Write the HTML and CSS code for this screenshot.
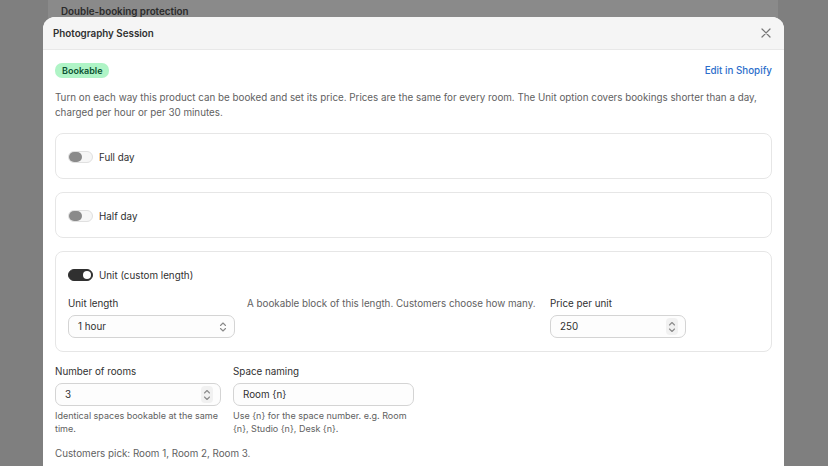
FILE: index.html
```html
<!DOCTYPE html>
<html lang="en">
<head>
    <meta charset="UTF-8">
    <meta name="viewport" content="width=device-width, initial-scale=1.0">
    <title>Photography Session</title>
    <link rel="stylesheet" href="styles.css">
</head>
<body>
    <div class="page">
        <div class="page-card">
            <h2>Double-booking protection</h2>
        </div>
    </div>

    <div class="modal">
        <div class="modal-header">
            <h1>Photography Session</h1>
            <button class="close-btn" aria-label="Close">
                <svg width="10" height="10" viewBox="0 0 10 10"><path d="M1 1L9 9M9 1L1 9" stroke="#777" stroke-width="1.2" stroke-linecap="round"/></svg>
            </button>
        </div>

        <div class="modal-body">
            <div class="top-row">
                <span class="badge">Bookable</span>
                <a class="link" href="#">Edit in Shopify</a>
            </div>
            <p class="intro">Turn on each way this product can be booked and set its price. Prices are the same for every room. The Unit option covers bookings shorter than a day, charged per hour or per 30 minutes.</p>

            <div class="option-card">
                <label class="toggle-row"><span class="toggle"></span>Full day</label>
            </div>

            <div class="option-card">
                <label class="toggle-row"><span class="toggle"></span>Half day</label>
            </div>

            <div class="option-card unit-card">
                <label class="toggle-row"><span class="toggle on"></span>Unit (custom length)</label>
                <div class="unit-fields">
                    <div class="field unit-length">
                        <label>Unit length</label>
                        <div class="input">1 hour
                            <svg class="chev" width="8" height="10" viewBox="0 0 8 10"><path d="M1.5 3.5L4 1L6.5 3.5M1.5 6.5L4 9L6.5 6.5" fill="none" stroke="#8a8a8a" stroke-width="1.1" stroke-linecap="round" stroke-linejoin="round"/></svg>
                        </div>
                    </div>
                    <div class="unit-desc">A bookable block of this length. Customers choose how many.</div>
                    <div class="field price">
                        <label>Price per unit</label>
                        <div class="input">250
                            <span class="spinner">
                                <svg width="8" height="12" viewBox="0 0 8 12"><path d="M1.5 4L4 1.5L6.5 4M1.5 8L4 10.5L6.5 8" fill="none" stroke="#8a8a8a" stroke-width="1.1" stroke-linecap="round" stroke-linejoin="round"/></svg>
                            </span>
                        </div>
                    </div>
                </div>
            </div>

            <div class="room-fields">
                <div class="field rooms">
                    <label>Number of rooms</label>
                    <div class="input">3
                        <span class="spinner">
                            <svg width="8" height="12" viewBox="0 0 8 12"><path d="M1.5 4L4 1.5L6.5 4M1.5 8L4 10.5L6.5 8" fill="none" stroke="#8a8a8a" stroke-width="1.1" stroke-linecap="round" stroke-linejoin="round"/></svg>
                        </span>
                    </div>
                    <div class="help">Identical spaces bookable at the same time.</div>
                </div>
                <div class="field naming">
                    <label>Space naming</label>
                    <div class="input">Room {n}</div>
                    <div class="help">Use {n} for the space number. e.g. Room {n}, Studio {n}, Desk {n}.</div>
                </div>
            </div>

            <p class="preview">Customers pick: Room 1, Room 2, Room 3.</p>
        </div>
    </div>
</body>
</html>
```

FILE: styles.css
```css
html, body {
    height: 100%;
}

body {
    margin: 0;
    font-family: Inter, "Noto Sans", sans-serif;
    color: #303030;
    background-color: #7f7f7f;
    overflow: hidden;
}

.page {
    padding: 0 50px 0 48px;
    height: 100%;
}

.page-card {
    background-color: #8a8a8a;
    height: 100%;
    padding: 6px 13px;
}

.page-card h2 {
    margin: 0;
    font-size: 9.8px;
    font-weight: 600;
    color: #2b2b2b;
}

/* modal sits over the page */
.modal {
    position: absolute;
    top: 17px;
    left: 43px;
    width: 741px;
    bottom: 0;
    background: white;
    border-radius: 12px 12px 0 0;
    overflow: hidden;
}

.modal-header {
    display: flex;
    align-items: center;
    justify-content: space-between;
    height: 33px;
    padding: 0 10px;
    background-color: #f5f5f5;
    border-bottom: 1px solid #e8e8e8;
    box-sizing: border-box;
}

.modal-header h1 {
    margin: 0;
    font-size: 9.8px;
    font-weight: 600;
    color: #303030;
}

.close-btn {
    background: none;
    border: none;
    padding: 0;
    width: 16px;
    height: 16px;
    display: flex;
    align-items: center;
    justify-content: center;
    cursor: pointer;
}

.modal-body {
    padding: 13px 12px;
}

.top-row {
    display: flex;
    align-items: center;
    justify-content: space-between;
}

.badge {
    background-color: #aff4c6;
    color: #0c5132;
    font-size: 9px;
    font-weight: 600;
    padding: 2px 7px;
    border-radius: 7px;
    line-height: 11px;
}

.link {
    color: #2c6ecb;
    font-size: 9.8px;
    font-weight: 500;
    text-decoration: none;
}

.intro {
    margin: 12px 0 13px;
    font-size: 9.8px;
    line-height: 15px;
    color: #616161;
}

.option-card {
    border: 1px solid #e6e6e6;
    border-radius: 8px;
    padding: 15px 12px 13px;
    margin-bottom: 13px;
}

.unit-card {
    padding-bottom: 13px;
}

.toggle-row {
    display: flex;
    align-items: center;
    gap: 6px;
    font-size: 9.8px;
    height: 16px;
}

.toggle {
    width: 25px;
    height: 12px;
    border-radius: 7px;
    background-color: #f6f6f6;
    border: 1px solid #e0e0e0;
    position: relative;
    box-sizing: border-box;
}

.toggle::after {
    content: "";
    position: absolute;
    left: 0;
    top: 0;
    width: 13px;
    height: 10px;
    border-radius: 5px;
    background-color: #8a8a8a;
}

.toggle.on {
    background-color: #303030;
    border-color: #303030;
}

.toggle.on::after {
    left: auto;
    right: 1px;
    top: 1px;
    width: 8px;
    height: 8px;
    background-color: white;
}

.unit-fields {
    display: flex;
    gap: 12px;
    margin-top: 14px;
}

.field label {
    display: block;
    font-size: 9.8px;
    line-height: 14px;
    margin-bottom: 4px;
}

.input {
    display: flex;
    align-items: center;
    justify-content: space-between;
    height: 23px;
    padding: 0 7px 0 9px;
    border: 1px solid #d4d4d4;
    border-radius: 7px;
    background-color: #fdfdfd;
    font-size: 9.8px;
    box-sizing: border-box;
}

.spinner {
    display: flex;
    align-items: center;
    justify-content: center;
    width: 12px;
    height: 17px;
    background-color: #f1f1f1;
    border-radius: 4px;
}

.unit-length {
    width: 167px;
}

.unit-desc {
    width: 291px;
    font-size: 9.8px;
    line-height: 14px;
    color: #616161;
}

.price {
    width: 136px;
}

.room-fields {
    display: flex;
    gap: 12px;
}

.rooms {
    width: 166px;
}

.naming {
    width: 181px;
}

.help {
    margin-top: 3px;
    font-size: 9px;
    line-height: 13px;
    color: #616161;
}

.preview {
    margin: 12px 0 0;
    font-size: 9.8px;
    line-height: 14px;
    color: #616161;
}
```
